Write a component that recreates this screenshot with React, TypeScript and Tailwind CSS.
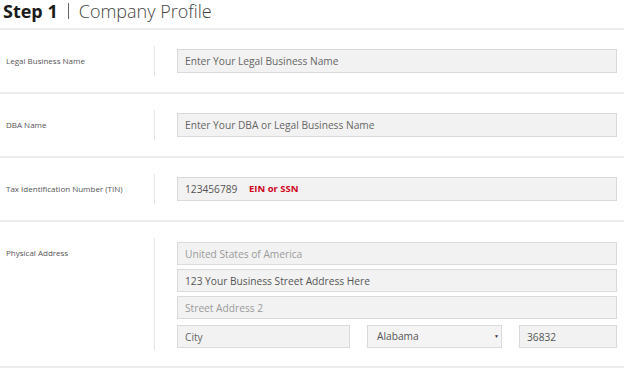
const font = { fontFamily: '"Open Sans", "Noto Sans", Arial, sans-serif' };

function Field({
  value,
  placeholder,
  className = "",
  dim = false,
}: {
  value?: string;
  placeholder?: string;
  className?: string;
  dim?: boolean;
}) {
  return (
    <input
      readOnly
      value={value ?? ""}
      placeholder={placeholder}
      className={
        "block h-[23px] border border-[#dadada] bg-[#f2f2f2] px-[7px] text-[10.2px] outline-none " +
        (dim ? "text-[#9a9a9a] placeholder:text-[#9a9a9a] " : "text-[#555] placeholder:text-[#666] ") +
        className
      }
    />
  );
}

function Row({ label, children }: { label: string; children: React.ReactNode }) {
  return (
    <div className="flex h-[64px] items-center border-b-2 border-[#ececec]">
      <div className="w-[154px] shrink-0 pl-[6px] text-[8px] text-[#555]">{label}</div>
      <div className="h-[30px] w-px shrink-0 bg-[#e4e4e4]" />
      <div className="ml-[22px] mr-[7px] min-w-0 flex-1">{children}</div>
    </div>
  );
}

export default function App() {
  return (
    <div className="h-[369px] w-[624px] overflow-hidden bg-white" style={font}>
      <div className="flex h-[30px] items-start border-b-2 border-[#ececec] pl-[3px] pt-[1px]">
        <span className="text-[18px] font-bold leading-[20px] text-[#1a1a1a]">Step 1</span>
        <span className="mx-[10px] mt-[2px] h-[16px] w-px bg-[#666]" />
        <span className="text-[18px] font-light leading-[20px] text-[#444]">Company Profile</span>
      </div>

      <Row label="Legal Business Name">
        <Field placeholder="Enter Your Legal Business Name" className="h-[24px] w-full" />
      </Row>

      <Row label="DBA Name">
        <Field placeholder="Enter Your DBA or Legal Business Name" className="h-[24px] w-full" />
      </Row>

      <Row label="Tax Identification Number (TIN)">
        <div className="relative">
          <Field value="123456789" className="h-[24px] w-full" />
          <span className="absolute left-[72px] top-[5px] text-[9.5px] font-bold leading-[14px] text-[#d0021b]">
            EIN or SSN
          </span>
        </div>
      </Row>

      <div className="flex items-start border-b-2 border-[#ececec] py-4">
        <div className="w-[154px] shrink-0 pl-[6px] pt-[9px] text-[8px] text-[#555]">Physical Address</div>
        <div className="h-[112px] w-px shrink-0 bg-[#e4e4e4]" />
        <div className="ml-[22px] mr-[7px] flex min-w-0 flex-1 flex-col gap-[4px] pt-[4px]">
          <Field placeholder="United States of America" dim className="w-full" />
          <Field value="123 Your Business Street Address Here" className="w-full" />
          <Field placeholder="Street Address 2" dim className="w-full" />
          <div className="mt-[2px] flex gap-[17px]">
            <Field placeholder="City" className="w-[173px] shrink-0" />
            <div className="relative flex h-[23px] w-[135px] shrink-0 items-center border border-[#dadada] bg-[#f4f4f4] pl-[9px] text-[10.2px] text-[#555]">
              Alabama
              <span className="absolute right-[2px] top-[7px] text-[5px] text-[#333]">▼</span>
            </div>
            <Field value="36832" className="min-w-0 flex-1" />
          </div>
        </div>
      </div>
    </div>
  );
}
